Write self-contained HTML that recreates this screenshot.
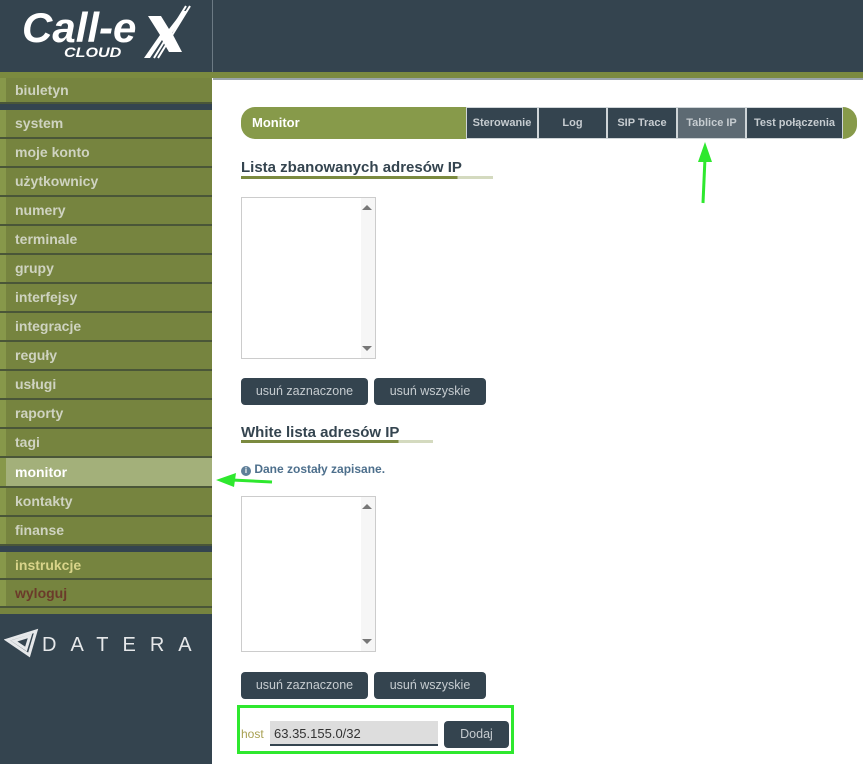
<!DOCTYPE html>
<html><head><meta charset="utf-8"><style>
*{margin:0;padding:0;box-sizing:border-box}
body{width:863px;height:764px;overflow:hidden;background:#fff;font-family:"Liberation Sans",sans-serif;position:relative}
.abs{position:absolute}
#hdr{left:0;top:0;width:863px;height:72px;background:#34444f}
#vl{left:212px;top:0;width:1px;height:72px;background:#6c7a84}
#ol{left:0;top:72px;width:863px;height:6px;background:#7b8a3f}
#gl{left:213px;top:78px;width:650px;height:2px;background:#9aa4aa}
#side{left:0;top:78px;width:212px;height:686px;background:#34444f}
.it{position:absolute;left:0;width:212px;background:#76843f;border-bottom:2px solid #4a5638;color:#cfd3c1;font-weight:bold;font-size:14px;padding-left:15px;box-shadow:inset 6px 0 0 #87984a}
.it.a{background:#a3b07a;color:#fff}
.tab{position:absolute;top:107px;height:32px;background:#34444f;color:#c6ccd0;font-weight:bold;font-size:11px;text-align:center;line-height:30px;border:1px solid #cfd5d8}
h3{position:absolute;font-size:15px;color:#34444f;font-weight:bold}
.ul{position:absolute;height:3px}
.box{position:absolute;width:135px;background:#fff;border:1px solid #ccc}
.box .sb{position:absolute;right:0;top:0;bottom:0;width:14px;background:#f6f6f6}
.up{position:absolute;right:3px;top:7px;width:0;height:0;border-left:5px solid transparent;border-right:5px solid transparent;border-bottom:5px solid #777}
.dn{position:absolute;right:3px;bottom:7px;width:0;height:0;border-left:5px solid transparent;border-right:5px solid transparent;border-top:5px solid #777}
.btn{position:absolute;height:27px;background:#34444f;color:#c6ccd0;font-size:12.5px;border-radius:4px;text-align:center;line-height:27px}
</style></head><body>
<div id="hdr" class="abs"></div>
<div id="vl" class="abs"></div>
<div class="abs" style="left:22px;top:4px;color:#fff;font-style:italic;font-weight:bold;font-size:42px;letter-spacing:0px">Call-e</div>
<svg class="abs" style="left:142px;top:4px" width="50" height="56"><path d="M6 12h13l8 13 14-18h5L30 29l10 19H27l-7-12-12 18H2l16-23z" fill="#fff"/><path d="M44 2L12 54M48 2L16 54" stroke="#fff" stroke-width="2"/></svg>
<div class="abs" style="left:64px;top:44px;color:#fff;font-style:italic;font-weight:bold;font-size:14px;transform:scaleX(1.15);transform-origin:left top">CLOUD</div>
<div id="ol" class="abs"></div>
<div id="gl" class="abs"></div>
<div id="side" class="abs"></div>
<div class="it" style="top:78px;height:26px;line-height:24px">biuletyn</div>
<div class="it" style="top:110px;height:29px;line-height:27px">system</div>
<div class="it" style="top:139px;height:29px;line-height:27px">moje konto</div>
<div class="it" style="top:168px;height:29px;line-height:27px">użytkownicy</div>
<div class="it" style="top:197px;height:29px;line-height:27px">numery</div>
<div class="it" style="top:226px;height:29px;line-height:27px">terminale</div>
<div class="it" style="top:255px;height:29px;line-height:27px">grupy</div>
<div class="it" style="top:284px;height:29px;line-height:27px">interfejsy</div>
<div class="it" style="top:313px;height:29px;line-height:27px">integracje</div>
<div class="it" style="top:342px;height:29px;line-height:27px">reguły</div>
<div class="it" style="top:371px;height:29px;line-height:27px">usługi</div>
<div class="it" style="top:400px;height:29px;line-height:27px">raporty</div>
<div class="it" style="top:429px;height:29px;line-height:27px">tagi</div>
<div class="it a" style="top:458px;height:30px;line-height:28px">monitor</div>
<div class="it" style="top:488px;height:29px;line-height:27px">kontakty</div>
<div class="it" style="top:517px;height:29px;line-height:27px">finanse</div>
<div class="it" style="top:552px;height:28px;line-height:26px;color:#d9d48a">instrukcje</div>
<div class="it" style="top:580px;height:28px;line-height:26px;color:#6b3a2a">wyloguj</div>
<div class="abs" style="left:0;top:608px;width:212px;height:6px;background:#76843f"></div>
<svg class="abs" style="left:4px;top:628px" width="36" height="30"><path d="M3 12L32 3 25 27zM10 13l16-5-4 13z" fill="none" stroke="#e6e8ea" stroke-width="3"/></svg>
<div class="abs" style="left:42px;top:634px;color:#e6e8ea;font-size:20px;letter-spacing:14px">DATERA</div>

<div class="abs" style="left:241px;top:107px;width:616px;height:32px;background:#879a4a;border-radius:14px"></div>
<div class="abs" style="left:252px;top:115px;color:#fff;font-weight:bold;font-size:13px">Monitor</div>
<div class="tab" style="left:466px;width:72px">Sterowanie</div>
<div class="tab" style="left:538px;width:69px">Log</div>
<div class="tab" style="left:607px;width:70px">SIP Trace</div>
<div class="tab" style="left:677px;width:69px;background:#5d6a73">Tablice IP</div>
<div class="tab" style="left:746px;width:97px">Test połączenia</div>
<svg class="abs" style="left:695px;top:140px" width="20" height="66"><path d="M10 2L3 22h14z" fill="#2ee82e"/><path d="M10 18L8 63" stroke="#2ee82e" stroke-width="3"/></svg>

<h3 style="left:241px;top:159px">Lista zbanowanych adresów IP</h3>
<div class="ul" style="left:241px;top:176px;width:252px;background:linear-gradient(90deg,#7b8a3f 0,#7b8a3f 86%,#d4dabf 86%)"></div>
<div class="box" style="left:241px;top:197px;height:162px"><div class="sb"><div class="up"></div><div class="dn"></div></div></div>
<div class="btn" style="left:241px;top:378px;width:127px">usuń zaznaczone</div>
<div class="btn" style="left:374px;top:378px;width:112px">usuń wszyskie</div>

<h3 style="left:241px;top:424px">White lista adresów IP</h3>
<div class="ul" style="left:241px;top:440px;width:192px;background:linear-gradient(90deg,#7b8a3f 0,#7b8a3f 82%,#d4dabf 82%)"></div>
<div class="abs" style="left:241px;top:462px;color:#4d6f8c;font-weight:bold;font-size:12px"><span style="display:inline-block;width:10px;height:10px;border-radius:50%;background:#5f7f99;color:#fff;font-size:8px;text-align:center;line-height:10px;vertical-align:0">i</span> Dane zostały zapisane.</div>
<svg class="abs" style="left:214px;top:470px" width="60" height="20"><path d="M2 10L22 3 20 17z" fill="#2ee82e"/><path d="M18 10L58 12" stroke="#2ee82e" stroke-width="3"/></svg>
<div class="box" style="left:241px;top:496px;height:156px"><div class="sb"><div class="up"></div><div class="dn"></div></div></div>
<div class="btn" style="left:241px;top:672px;width:127px">usuń zaznaczone</div>
<div class="btn" style="left:374px;top:672px;width:112px">usuń wszyskie</div>

<div class="abs" style="left:237px;top:705px;width:277px;height:49px;border:3px solid #2ee82e"></div>
<div class="abs" style="left:241px;top:727px;color:#a8a052;font-size:12px">host</div>
<div class="abs" style="left:270px;top:721px;width:168px;height:25px;background:#ddd;border-bottom:2px solid #34444f;font-size:13px;color:#333;padding:5px 4px">63.35.155.0/32</div>
<div class="btn" style="left:444px;top:721px;width:65px">Dodaj</div>
</body></html>
